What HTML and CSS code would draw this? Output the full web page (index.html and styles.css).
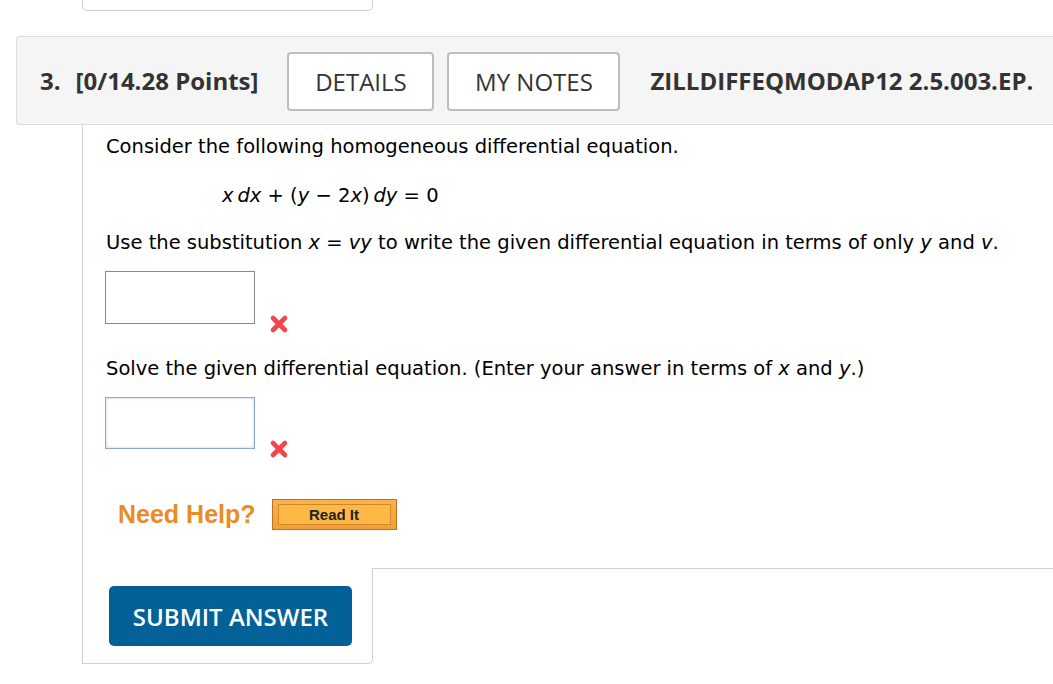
FILE: index.html
```html
<!DOCTYPE html>
<html>
<head>
<meta charset="utf-8">
<link rel="stylesheet" href="styles.css">
</head>
<body>
<div class="prev-card"></div>
<div class="q-header">
  <span class="q-num">3.</span>
  <span class="q-points">[0/14.28 Points]</span>
  <button class="hbtn details">DETAILS</button>
  <button class="hbtn notes">MY NOTES</button>
  <span class="q-code">ZILLDIFFEQMODAP12 2.5.003.EP.</span>
</div>
<div class="q-body">
  <p class="para intro">Consider the following homogeneous differential equation.</p>
  <p class="eq"><i>x</i>&#8201;<i>dx</i> + (<i>y</i> &minus; 2<i>x</i>)&#8201;<i>dy</i> = 0</p>
  <p class="para">Use the substitution <i>x</i> = <i>vy</i> to write the given differential equation in terms of only <i>y</i> and <i>v</i>.</p>
  <div class="answer">
    <div class="inbox"></div>
    <svg class="xmark" width="22" height="22" viewBox="0 0 22 22"><path d="M5 5 L17 17 M17 5 L5 17" stroke="#f2464c" stroke-width="4.6" stroke-linecap="round"/></svg>
  </div>
  <p class="para">Solve the given differential equation. (Enter your answer in terms of <i>x</i> and <i>y</i>.)</p>
  <div class="answer last">
    <div class="inbox focus"></div>
    <svg class="xmark" width="22" height="22" viewBox="0 0 22 22"><path d="M5 5 L17 17 M17 5 L5 17" stroke="#f2464c" stroke-width="4.6" stroke-linecap="round"/></svg>
  </div>
  <div class="help">
    <span class="need">Need Help?</span>
    <span class="readit"><span class="readit-in">Read It</span></span>
  </div>
</div>
<div class="q-footer">
  <div class="foot-left">
    <button class="submit">SUBMIT ANSWER</button>
  </div>
  <div class="foot-right"></div>
</div>
</body>
</html>
```

FILE: styles.css
```css
html, body {
  margin: 0;
  padding: 0;
  background: #fff;
}
body {
  width: 1053px;
  height: 684px;
  overflow: hidden;
  font-family: "DejaVu Sans", Verdana, sans-serif;
  color: #000;
}
.prev-card {
  margin-left: 82px;
  width: 291px;
  height: 11px;
  box-sizing: border-box;
  border: 1px solid #cfcfcf;
  border-top: none;
  border-radius: 0 0 5px 5px;
}
.q-header {
  margin-top: 25px;
  margin-left: 16px;
  height: 89px;
  box-sizing: border-box;
  border: 1px solid #dcdcdc;
  border-right: none;
  border-radius: 4px 0 0 4px;
  background: #f5f5f5;
  display: flex;
  align-items: center;
  padding-left: 23px;
  font-family: "Open Sans", sans-serif;
  color: #333;
}
.q-num {
  font-weight: 700;
  font-size: 24px;
  margin-right: 15px;
}
.q-points {
  font-weight: 700;
  font-size: 24px;
  margin-right: 29px;
}
.hbtn {
  font-family: "Open Sans", sans-serif;
  font-size: 24px;
  color: #333;
  background: #fff;
  border: 2px solid #bdbdbd;
  border-radius: 4px;
  height: 59px;
  padding: 0;
  margin-top: 2px;
}
.details {
  margin-right: 13px;
  width: 147px;
}
.notes {
  width: 173px;
  margin-right: 30px;
}
.q-code {
  font-weight: 700;
  font-size: 24px;
  letter-spacing: 0;
}
.q-body {
  margin-left: 82px;
  border-left: 1px solid #cfcfcf;
  padding-left: 23px;
  padding-top: 10px;
  padding-bottom: 38px;
}
.para {
  font-size: 19.5px;
  line-height: 24px;
  margin: 0 0 16px 0;
}
.para.intro {
  margin-bottom: 25px;
}
.eq {
  font-size: 19.5px;
  line-height: 24px;
  margin: 0 0 23px 116px;
}
.answer {
  display: flex;
  align-items: flex-end;
  margin-bottom: 33px;
}
.answer.last {
  margin-bottom: 0;
}
.inbox {
  width: 150px;
  height: 53px;
  box-sizing: border-box;
  border: 1px solid #8a8a8a;
  background: #fff;
  margin-left: -1px;
}
.inbox.focus {
  height: 52px;
  border-color: #86a9d8;
  box-shadow: inset 0 0 3px rgba(120, 160, 215, 0.55);
}
.xmark {
  margin-left: 13px;
  margin-bottom: -11px;
}
.help {
  display: flex;
  align-items: center;
  margin-top: 50px;
  margin-left: 12px;
  height: 31px;
}
.need {
  font-family: "Liberation Sans", Arial, sans-serif;
  font-weight: 700;
  font-size: 25px;
  color: #ec8a24;
  margin-right: 16px;
}
.readit {
  display: inline-block;
  box-sizing: border-box;
  width: 125px;
  height: 31px;
  border: 1px solid #b8742a;
  background: linear-gradient(#fbb24a, #f59d32);
  padding: 4px 5px;
}
.readit-in {
  display: flex;
  align-items: center;
  justify-content: center;
  box-sizing: border-box;
  height: 100%;
  border: 1px solid #cf8730;
  background: #fdb845;
  font-family: "Liberation Sans", Arial, sans-serif;
  font-weight: 700;
  font-size: 15px;
  color: #222;
}
.q-footer {
  display: flex;
}
.foot-left {
  margin-left: 82px;
  width: 291px;
  box-sizing: border-box;
  height: 96px;
  border: 1px solid #cfcfcf;
  border-top: none;
  border-radius: 0 0 5px 0;
  padding: 18px 0 0 26px;
}
.foot-right {
  flex: 1;
  border-top: 1px solid #cfcfcf;
}
.submit {
  display: block;
  width: 243px;
  height: 60px;
  background: #046197;
  color: #fff;
  border: none;
  border-radius: 5px;
  font-family: "Open Sans", sans-serif;
  font-weight: 600;
  font-size: 24px;
  padding: 0;
}
```
